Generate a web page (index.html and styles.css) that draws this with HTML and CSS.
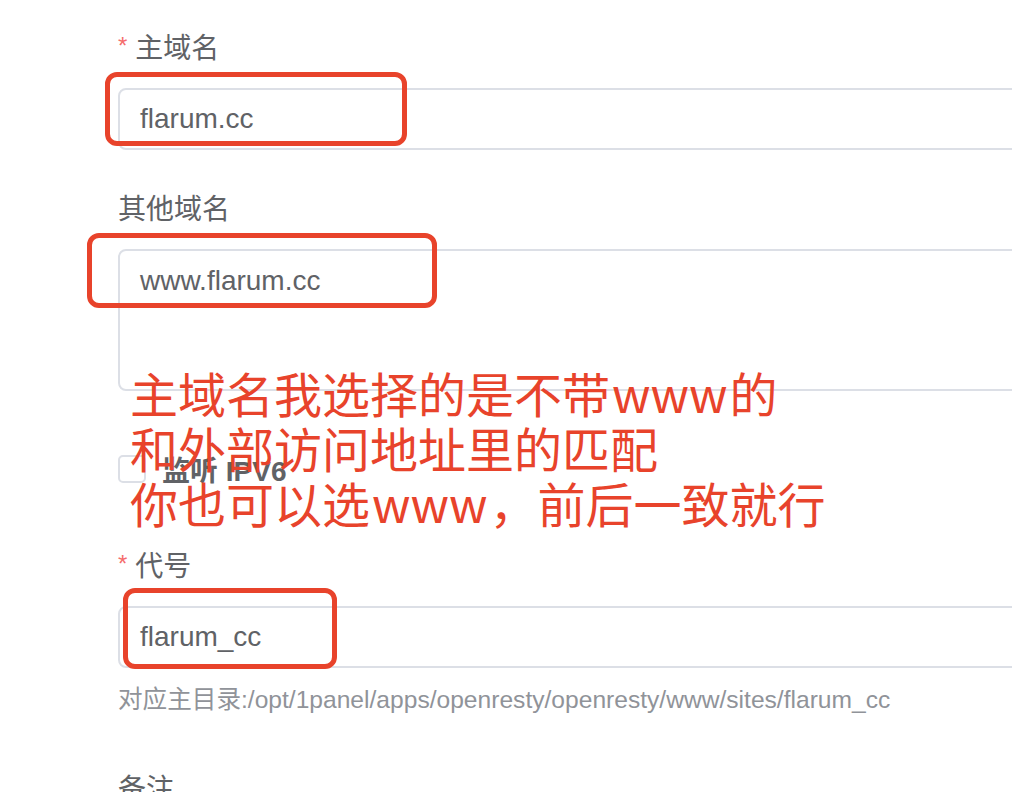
FILE: index.html
```html
<!DOCTYPE html>
<html>
<head>
    <title>创建网站</title>
    <link rel="stylesheet" href="styles.css">
</head>
<body>
    <div class="form">
        <!-- 主域名 -->
        <div class="form-item">
            <label class="label required">主域名</label>
            <div class="input"><span class="value">flarum.cc</span></div>
        </div>

        <!-- 其他域名 -->
        <div class="form-item">
            <label class="label">其他域名</label>
            <div class="textarea"><span class="value">www.flarum.cc</span></div>
        </div>

        <div class="form-item check-item">
            <span class="checkbox"></span>
            <span class="check-label">监听 IPV6</span>
        </div>

        <!-- 代号 -->
        <div class="form-item">
            <label class="label required">代号</label>
            <div class="input"><span class="value">flarum_cc</span></div>
            <div class="help">对应主目录:/opt/1panel/apps/openresty/openresty/www/sites/flarum_cc</div>
        </div>

        <div class="form-item">
            <label class="label">备注</label>
        </div>
    </div>

    <!-- annotations drawn over the form -->
    <div class="mark mark-domain"></div>
    <div class="mark mark-other"></div>
    <div class="mark mark-code"></div>

    <div class="note">
        主域名我选择的是不带<span class="latin">www</span>的<br>
        和外部访问地址里的匹配<br>
        你也可以选<span class="latin">www</span>，前后一致就行
    </div>
</body>
</html>
```

FILE: styles.css
```css
body {
    margin: 0;
    background: #FFFFFF;
    font-family: 'Liberation Sans', 'Noto Sans CJK SC', sans-serif;
    color: #606266;
    overflow: hidden;
    height: 792px;
    position: relative;
}

.form {
    padding: 29px 0 0 118px;
    width: 1100px;
}

.form-item {
    margin-bottom: 40px;
}

.label {
    display: block;
    height: 40px;
    font-size: 28px;
    line-height: 40px;
    margin-bottom: 19px;
    color: #606266;
}

.label.required::before {
    content: '*';
    display: inline-block;
    color: #F56C6C;
    font-size: 24px;
    line-height: 24px;
    margin-right: 8px;
    position: relative;
    top: -4px;
}

.input, .textarea {
    box-sizing: border-box;
    border: 2px solid #DCDFE6;
    border-radius: 8px;
    padding: 0 20px;
    font-size: 28px;
    color: #606266;
}

.input {
    height: 62px;
    display: flex;
    align-items: center;
}

.textarea {
    height: 142px;
    padding-top: 9px;
    line-height: 42px;
}

.check-item {
    height: 76px;
    display: flex;
    align-items: center;
}

.checkbox {
    box-sizing: border-box;
    width: 28px;
    height: 28px;
    border: 2px solid #DCDFE6;
    border-radius: 5px;
    margin-right: 16px;
}

.check-label {
    font-size: 28px;
    font-weight: bold;
    color: #606266;
}

.help {
    margin-top: 16px;
    font-size: 24.6px;
    line-height: 32px;
    color: #909399;
    margin-bottom: 54px;
}

.mark {
    position: absolute;
    box-sizing: border-box;
    border: 5px solid #E8432B;
    border-radius: 12px;
}

.mark-domain {
    left: 105px;
    top: 72px;
    width: 302px;
    height: 74px;
}

.mark-other {
    left: 87px;
    top: 233px;
    width: 350px;
    height: 75px;
}

.mark-code {
    left: 123px;
    top: 588px;
    width: 214px;
    height: 81px;
}

.note {
    position: absolute;
    left: 130px;
    top: 365px;
    font-family: 'Noto Sans CJK SC', sans-serif;
    font-size: 48px;
    line-height: 55px;
    color: #E8432B;
    white-space: nowrap;
}

.note .latin {
    margin: 0 2px;
}
```
